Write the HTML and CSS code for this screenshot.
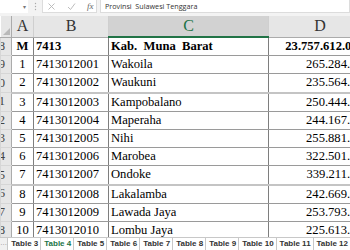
FILE: index.html
```html
<!DOCTYPE html>
<html lang="id">
<head>
  <meta charset="UTF-8">
  <meta name="viewport" content="width=device-width, initial-scale=1.0">
  <title>Table 4</title>
  <link rel="stylesheet" href="styles.css">
</head>
<body>
  <!-- formula bar -->
  <div class="formula-bar">
    <div class="name-box"><span class="caret">▾</span></div>
    <div class="grip">
      <svg width="3" height="9" viewBox="0 0 3 9"><circle cx="1.5" cy="1.5" r="0.7"/><circle cx="1.5" cy="4.5" r="0.7"/><circle cx="1.5" cy="7.5" r="0.7"/></svg>
    </div>
    <div class="fx-box">
      <svg class="ico" width="9" height="9" viewBox="0 0 9 9"><path d="M1.5 1.5 L7.5 7.5 M7.5 1.5 L1.5 7.5"/></svg>
      <svg class="ico" width="9" height="9" viewBox="0 0 9 9"><path d="M1 5 L3.5 7.5 L8 1.5"/></svg>
      <span class="fx">fx</span>
    </div>
    <div class="formula-input">Provinsi&nbsp; Sulawesi Tenggara</div>
  </div>

  <!-- sheet -->
  <div class="sheet">
    <table class="grid">
      <colgroup>
        <col class="c-rh"><col class="c-a"><col class="c-b"><col class="c-c"><col class="c-d">
      </colgroup>
      <thead>
        <tr>
          <th class="corner"><span class="tri"></span></th>
          <th>A</th>
          <th>B</th>
          <th class="selected">C</th>
          <th>D</th>
        </tr>
      </thead>
      <tbody>
        <tr class="total">
          <td class="rh"><div>8</div></td>
          <td class="no">M</td>
          <td>7413</td>
          <td class="name first">Kab.&nbsp; Muna&nbsp; Barat</td>
          <td class="num">23.757.612.000</td>
        </tr>
        <tr><td class="rh"><div>9</div></td><td class="no">1</td><td>7413012001</td><td class="name">Wakoila</td><td class="num">265.284.000</td></tr>
        <tr><td class="rh"><div>10</div></td><td class="no">2</td><td>7413012002</td><td class="name">Waukuni</td><td class="num">235.564.000</td></tr>
        <tr class="brk"><td class="rh"><div>11</div></td><td class="no">3</td><td>7413012003</td><td class="name">Kampobalano</td><td class="num">250.444.000</td></tr>
        <tr><td class="rh"><div>12</div></td><td class="no">4</td><td>7413012004</td><td class="name">Maperaha</td><td class="num">244.167.000</td></tr>
        <tr><td class="rh"><div>13</div></td><td class="no">5</td><td>7413012005</td><td class="name">Nihi</td><td class="num">255.881.000</td></tr>
        <tr><td class="rh"><div>14</div></td><td class="no">6</td><td>7413012006</td><td class="name">Marobea</td><td class="num">322.501.000</td></tr>
        <tr><td class="rh"><div>15</div></td><td class="no">7</td><td>7413012007</td><td class="name">Ondoke</td><td class="num">339.211.000</td></tr>
        <tr class="brk"><td class="rh"><div>16</div></td><td class="no">8</td><td>7413012008</td><td class="name">Lakalamba</td><td class="num">242.669.000</td></tr>
        <tr><td class="rh"><div>17</div></td><td class="no">9</td><td>7413012009</td><td class="name">Lawada Jaya</td><td class="num">253.793.000</td></tr>
        <tr><td class="rh"><div>18</div></td><td class="no">10</td><td>7413012010</td><td class="name">Lombu Jaya</td><td class="num">225.613.000</td></tr>
      </tbody>
    </table>
  </div>

  <!-- sheet tabs -->
  <div class="tabs">
    <span class="more">...</span>
    <div class="tab-list">
      <span class="tab">Table 3</span>
      <span class="tab active">Table 4</span>
      <span class="tab">Table 5</span>
      <span class="tab">Table 6</span>
      <span class="tab">Table 7</span>
      <span class="tab">Table 8</span>
      <span class="tab">Table 9</span>
      <span class="tab">Table 10</span>
      <span class="tab">Table 11</span>
      <span class="tab">Table 12</span>
    </div>
  </div>
</body>
</html>
```

FILE: styles.css
```css
body {
  margin: 0;
  width: 350px;
  height: 250px;
  overflow: hidden;
  background: #fff;
  font-family: 'Liberation Serif', serif;
  color: #000;
}
/* formula bar */
.formula-bar {
  display: flex;
  height: 13px;
  padding-bottom: 3px;
  background: #f3f3f3;
}
.name-box {
  width: 26px;
  background: #fff;
  display: flex;
  justify-content: flex-end;
  align-items: center;
  padding-right: 2px;
}
.caret {
  font-family: 'DejaVu Sans', sans-serif;
  font-size: 6px;
  color: #777;
}
.grip {
  width: 14px;
  display: flex;
  align-items: center;
  justify-content: center;
}
.grip svg {
  fill: #aaa;
}
.fx-box {
  width: 55px;
  background: #fff;
  border: 1px solid #dcdcdc;
  border-top: none;
  display: flex;
  align-items: center;
  gap: 11px;
  padding-left: 4px;
  box-sizing: border-box;
}
.ico {
  fill: none;
  stroke: #b5b5b5;
  stroke-width: 0.9;
}
.fx {
  font-family: 'Liberation Serif', serif;
  font-style: italic;
  font-size: 9px;
  color: #666;
}
.formula-input {
  flex: 1;
  margin-left: 3px;
  background: #fff;
  border: 1px solid #dcdcdc;
  border-top: none;
  font-family: 'Open Sans', sans-serif;
  font-size: 7.2px;
  line-height: 12px;
  padding-left: 4px;
  color: #333;
  white-space: nowrap;
}
/* grid */
.sheet {
  height: 221px;
  overflow: hidden;
}
.grid {
  border-collapse: collapse;
  table-layout: fixed;
  width: 371px;
}
.c-rh { width: 11px; }
.c-a { width: 22px; }
.c-b { width: 75px; }
.c-c { width: 160px; }
.c-d { width: 103px; }
.grid th {
  height: 20px;
  padding: 0;
  background: #e6e6e6;
  border-right: 1px solid #cfcfcf;
  border-bottom: 1px solid #ababab;
  font-weight: normal;
  font-size: 16px;
  color: #333;
  text-align: center;
  line-height: 20px;
}
.grid th.selected {
  background: #d2d2d2;
  color: #217346;
  border-bottom: 2px solid #217346;
}
.grid th.corner {
  position: relative;
  border-right: 1px solid #ababab;
}
.tri {
  position: absolute;
  right: 1px;
  bottom: 2px;
  width: 0;
  height: 0;
  border-left: 7px solid transparent;
  border-bottom: 7px solid #b9b9b9;
}
.grid td {
  height: 17.2px;
  padding: 0 2px;
  border: 1px solid #9a9a9a;
  border-left-color: #7e7e7e;
  border-right-color: #7e7e7e;
  font-size: 12.6px;
  white-space: nowrap;
  overflow: hidden;
}
.grid td.rh {
  padding: 0;
  background: #e6e6e6;
  border-color: #d6d6d6;
  border-right-color: #ababab;
  color: #444;
}
.rh div {
  display: flex;
  justify-content: flex-end;
  padding-right: 6px;
  overflow: hidden;
}
.grid td.no {
  text-align: center;
  padding: 0;
}
.grid td.name {
  padding-left: 2px;
}
.grid td.first {
  border-left: 1px solid #217346;
}
.grid td.num {
  text-align: right;
}
.total td {
  font-weight: bold;
}
.total td.rh {
  font-weight: normal;
}
.grid .total td.num {
  padding-right: 7px;
}
.brk td {
  border-top: 2px solid #c4c4c4;
}
.brk td.rh {
  border-top: 1px solid #d6d6d6;
}
/* sheet tabs */
.tabs {
  display: flex;
  height: 13px;
  background: #f0f0f0;
  border-top: 1px solid #c8c8c8;
  font-family: 'Liberation Sans', sans-serif;
}
.more {
  width: 13px;
  font-size: 8px;
  line-height: 9px;
  color: #999;
  text-align: center;
}
.tab-list {
  display: flex;
  flex: 1;
  border-bottom: 1px solid #217346;
}
.tab {
  padding: 0 2px 0 3px;
  border-left: 1px solid #c8c8c8;
  background: #fff;
  font-size: 8px;
  font-weight: bold;
  line-height: 11px;
  color: #333;
  white-space: nowrap;
}
.tab.active {
  color: #217346;
}
```
